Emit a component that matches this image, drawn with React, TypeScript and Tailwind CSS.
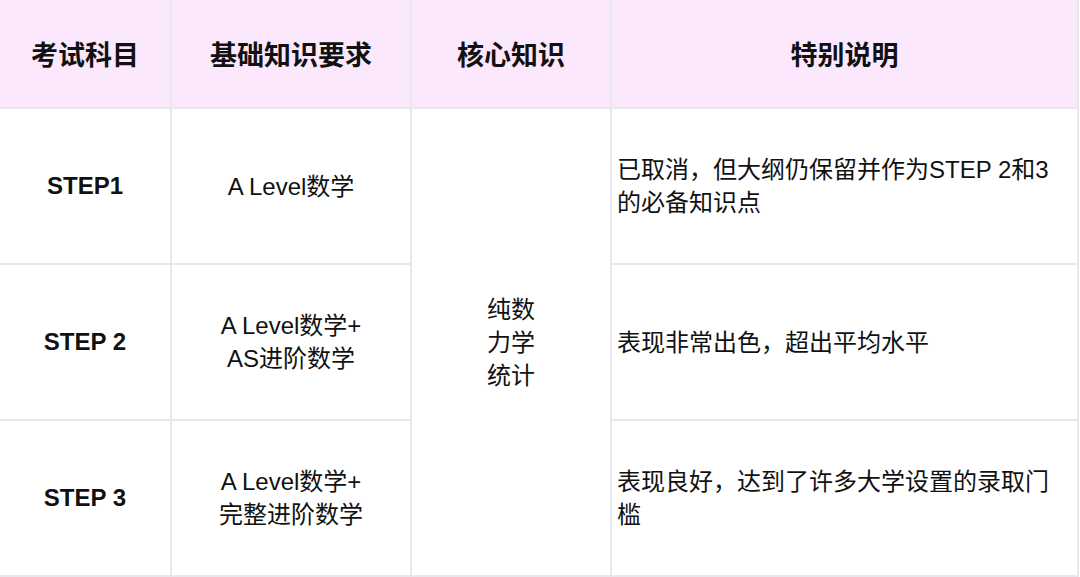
const rows = [
  {
    subject: 'STEP1',
    basis: ['A Level数学'],
    note: '已取消，但大纲仍保留并作为STEP 2和3的必备知识点',
  },
  {
    subject: 'STEP 2',
    basis: ['A Level数学+', 'AS进阶数学'],
    note: '表现非常出色，超出平均水平',
  },
  {
    subject: 'STEP 3',
    basis: ['A Level数学+', '完整进阶数学'],
    note: '表现良好，达到了许多大学设置的录取门槛',
  },
];

const headers = ['考试科目', '基础知识要求', '核心知识', '特别说明'];

const App = () => {
  return (
    <div
      className="h-[577px] w-[1080px] overflow-hidden bg-white text-[#111]"
      style={{ fontFamily: '"Liberation Sans", "Noto Sans CJK SC", sans-serif' }}
    >
      <table className="w-[1079px] table-fixed border-collapse">
        <colgroup>
          <col className="w-[171px]" />
          <col className="w-[240px]" />
          <col className="w-[200px]" />
          <col />
        </colgroup>
        <thead>
          <tr className="h-[108px] bg-[#fce8fc]">
            {headers.map((h) => (
              <th
                key={h}
                className="border-2 border-t-0 border-[#e9e7ee] pt-[5px] text-center text-[27px] font-bold first:border-l-0"
              >
                {h}
              </th>
            ))}
          </tr>
        </thead>
        <tbody>
          {rows.map((row, i) => (
            <tr key={row.subject} className="h-[156px]">
              <td className="border-2 border-l-0 border-[#e9e7ee] text-center text-[24px] font-bold">
                {row.subject}
              </td>
              <td className="border-2 border-[#e9e7ee] text-center text-[24px] leading-[33px]">
                {row.basis.map((b) => (
                  <div key={b}>{b}</div>
                ))}
              </td>
              {i === 0 && (
                <td
                  rowSpan={3}
                  className="border-2 border-[#e9e7ee] text-center text-[24px] leading-[33px]"
                >
                  <div>纯数</div>
                  <div>力学</div>
                  <div>统计</div>
                </td>
              )}
              <td className="border-2 border-[#e9e7ee] px-[5px] text-left text-[24px] leading-[33px]">
                {row.note}
              </td>
            </tr>
          ))}
        </tbody>
      </table>
    </div>
  );
};

export default App;
